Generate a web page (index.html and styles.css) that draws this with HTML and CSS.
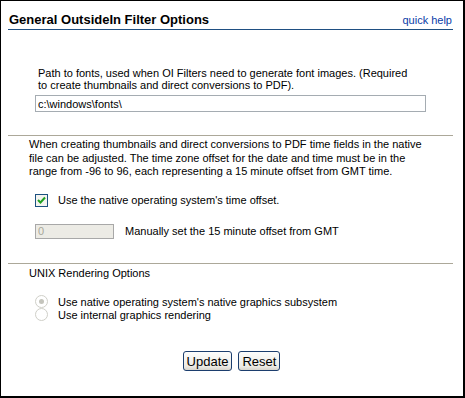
FILE: index.html
```html
<!DOCTYPE html>
<html lang="en">
<head>
  <meta charset="UTF-8" />
  <title>General OutsideIn Filter Options</title>
  <link rel="stylesheet" href="styles.css">
</head>
<body>
  <div class="panel">
    <div class="panel-header">
      <h1>General OutsideIn Filter Options</h1>
      <a href="#" class="help">quick help</a>
    </div>

    <!-- fonts path -->
    <div class="section fonts">
      <p class="note">Path to fonts, used when OI Filters need to generate font images. (Required to create thumbnails and direct conversions to PDF).</p>
      <input type="text" class="field wide" value="c:\windows\fonts\" />
    </div>

    <!-- time offset -->
    <div class="section time">
      <p class="desc">When creating thumbnails and direct conversions to PDF time fields in the native file can be adjusted. The time zone offset for the date and time must be in the range from -96 to 96, each representing a 15 minute offset from GMT time.</p>
      <label class="check-row">
        <span class="checkbox"><svg width="9" height="8" viewBox="0 0 9 8"><path d="M1 4 L3.5 6.5 L8 1.5" fill="none" stroke="#21a121" stroke-width="2"/></svg></span>
        Use the native operating system's time offset.
      </label>
      <div class="offset-row">
        <input type="text" class="field small" value="0" disabled />
        <span>Manually set the 15 minute offset from GMT</span>
      </div>
    </div>

    <!-- unix rendering -->
    <div class="section unix">
      <div class="desc">UNIX Rendering Options</div>
      <div class="radios">
        <label class="radio-row"><span class="radio on"></span>Use native operating system's native graphics subsystem</label>
        <label class="radio-row"><span class="radio"></span>Use internal graphics rendering</label>
      </div>
    </div>

    <div class="buttons">
      <button class="btn">Update</button>
      <button class="btn">Reset</button>
    </div>
  </div>
</body>
</html>
```

FILE: styles.css
```css
* { box-sizing: border-box; margin: 0; padding: 0; }
body {
  font-family: 'Liberation Sans', Arial, sans-serif;
  font-size: 11px;
  color: #000;
  background: #fff;
}
.panel {
  width: 465px;
  height: 398px;
  border-style: solid;
  border-color: #000;
  border-width: 1px 2px 2px 1px;
  display: flex;
  flex-direction: column;
}
.panel-header {
  display: flex;
  justify-content: space-between;
  align-items: baseline;
  margin: 0 10px 0 7px;
  padding: 11px 1px 2px 1px;
  border-bottom: 1px solid #1f4f82;
}
.panel-header h1 { font-size: 13px; font-weight: bold; line-height: 15px; }
.help { color: #0a3ca8; text-decoration: none; font-size: 11px; }

.section { margin: 0 10px 0 7px; border-bottom: 1px solid #aca899; }
.fonts { padding: 37px 0 23px 30px; }
.note { line-height: 12px; width: 380px; }
.field {
  font-family: inherit;
  font-size: 11px;
  border: 1px solid #a5acb2;
  height: 17px;
  padding: 0 2px;
  color: #000;
  background: #fff;
}
.wide { width: 391px; margin: 4px 0 0 -3px; display: block; }

.time { padding: 2px 0 24px 21px; }
.desc { line-height: 13.5px; width: 400px; }
.check-row { display: flex; align-items: center; gap: 10px; margin: 15px 0 0 6px; }
.checkbox {
  width: 13px; height: 13px;
  border: 1px solid #1c5180;
  background: #f4f4f0;
  display: flex; align-items: center; justify-content: center;
}
.offset-row { display: flex; align-items: center; gap: 11px; margin: 17px 0 0 6px; }
.small { width: 79px; height: 15px; background: #ecebe5; border-color: #a8a8a8; color: #a8a899; }

.unix { border-bottom: none; padding: 3px 0 0 21px; }
.radios { margin: 15px 0 0 6px; display: flex; flex-direction: column; }
.radio-row { display: flex; align-items: center; gap: 10px; height: 13px; }
.radio {
  width: 13px; height: 13px; border-radius: 50%;
  border: 1px solid #cfcfc8;
  background: #fff;
  display: flex; align-items: center; justify-content: center;
}
.radio.on::after { content: ""; width: 5px; height: 5px; border-radius: 50%; background: #c4c4bc; }

.buttons { display: flex; justify-content: center; gap: 6px; margin-top: 30px; padding-right: 1px; }
.btn {
  font-family: inherit;
  font-size: 13px;
  height: 20px;
  padding: 0 3px;
  border: 1px solid #1c3e6e;
  border-radius: 3px;
  background: linear-gradient(#fdfdfc, #eceae4 80%, #d8d5cc);
  color: #000;
}
```
